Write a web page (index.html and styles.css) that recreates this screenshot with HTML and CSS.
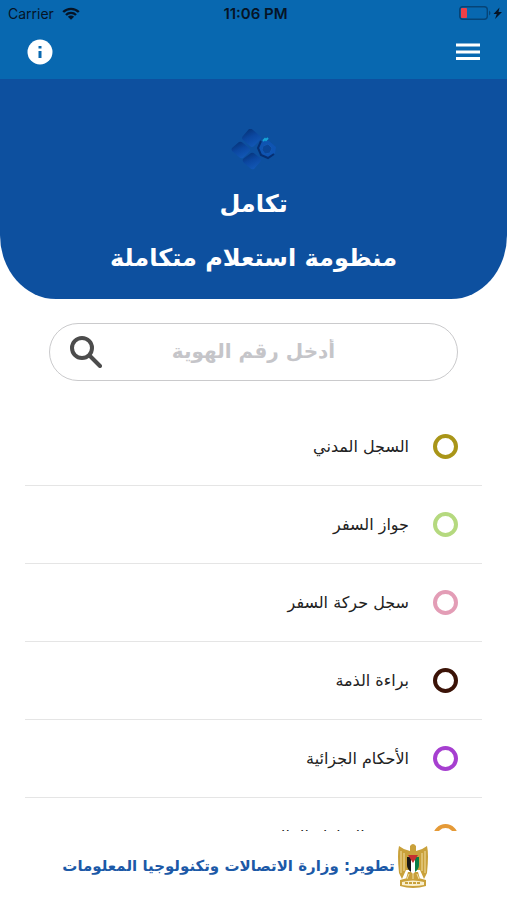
FILE: index.html
```html
<!DOCTYPE html>
<html lang="ar" dir="rtl">
<head>
<meta charset="utf-8">
<meta name="viewport" content="width=device-width, initial-scale=1">
<title>تكامل</title>
<link rel="stylesheet" href="styles.css">
</head>
<body>
<div class="app">
  <header class="topbar">
    <div class="status" dir="ltr">
      <span class="carrier">Carrier
        <svg class="wifi" viewBox="0 0 18 13" aria-hidden="true"><path d="M1.2 5a11.2 11.2 0 0 1 15.6 0M4 8a7 7 0 0 1 10 0" fill="none" stroke="#061426" stroke-width="2.4"/><path d="M5.9 9.7a4.4 4.4 0 0 1 6.2 0L9 12.8z" fill="#061426"/></svg>
      </span>
      <span class="time">11:06 PM</span>
      <span class="power">
        <svg class="battery" viewBox="0 0 44 14" aria-hidden="true"><rect x=".7" y=".7" width="27.6" height="12.6" rx="3" fill="none" stroke="#064477" stroke-width="1.4"/><path d="M30 4.5q3 2.500 0 5z" fill="#064477"/><rect x="2" y="2" width="6" height="10" rx="1" fill="#ef4048"/><path d="M40.500 1.500l-6 6.500h3.300L36 13l7-7h-3.500z" fill="#061426"/></svg>
      </span>
    </div>
    <nav class="toolbar">
      <button class="icon-button" aria-label="القائمة"><svg class="menu" viewBox="0 0 24 18" aria-hidden="true"><path d="M0 2h24M0 9h24M0 15.500h24" stroke="#fff" stroke-width="2.800"/></svg></button>
      <button class="icon-button" aria-label="معلومات"><svg class="info" viewBox="0 0 26 26" aria-hidden="true"><circle cx="13" cy="13" r="12.500" fill="#fff"/><path d="M11.500 7h3v2.600h-3zM11.500 12h3v7h-3z" fill="#0868b0"/></svg></button>
    </nav>
  </header>
  <section class="hero">
    <svg class="logo" viewBox="0 0 46 42" aria-hidden="true">
      <defs><linearGradient id="tile" x1=".1" y1="0" x2=".6" y2="1"><stop offset="0" stop-color="#052f70"/><stop offset=".5" stop-color="#0b47a0"/><stop offset="1" stop-color="#1258b6"/></linearGradient></defs>
      <g fill="url(#tile)"><path d="M18 0q2-1 4 1l7 6q2 2 0 4l-6 6q-2 2-4 0l-7-6q-2-2 0-4z"/><path d="M8 13q2-1 4 1l6 5q2 2 0 4l-6 6q-2 1-4-1l-7-6q-1-2 0-3z"/><path d="M20 24q2-1 4 1l5 4q2 2 0 4l-6 7q-2 1-4-1l-6-5q-2-2-1-4z"/></g>
      <path d="M30 12h8l7 6-1 6-6 5-7-2-3-8z" fill="#0f54b2"/>
      <path d="M30 12l-3 7 3 7 7 3 6-4" fill="none" stroke="#062f72" stroke-width="2"/>
      <path d="M32 17l5-2 4 4-2 5-5 1-3-4z" fill="#0b4698" stroke="#1258b4"/>
      <path d="M32 12l2-2 1 1 2-2" fill="none" stroke="#16a4d7" stroke-width="2"/>
    </svg>
    <h1 class="title">تكامل</h1>
    <p class="subtitle">منظومة استعلام متكاملة</p>
  </section>
  <main class="content">
    <form class="search">
      <input class="search-input" type="text" aria-label="رقم الهوية" placeholder="أدخل رقم الهوية">
      <button class="search-button" type="button" aria-label="بحث"><svg class="lens" viewBox="0 0 32 32" aria-hidden="true"><circle cx="12" cy="12" r="10" fill="none" stroke="#4c4c4c" stroke-width="4"/><path d="M20 20l10 10" stroke="#4c4c4c" stroke-width="4" stroke-linecap="round"/></svg></button>
    </form>
    <ul class="services">
      <li class="service"><span class="ring olive"></span><a class="service-link" href="#">السجل المدني</a></li>
      <li class="service"><span class="ring green"></span><a class="service-link" href="#">جواز السفر</a></li>
      <li class="service"><span class="ring pink"></span><a class="service-link" href="#">سجل حركة السفر</a></li>
      <li class="service"><span class="ring brown"></span><a class="service-link" href="#">براءة الذمة</a></li>
      <li class="service"><span class="ring purple"></span><a class="service-link" href="#">الأحكام الجزائية</a></li>
      <li class="service"><span class="ring orange"></span><a class="service-link" href="#">رسوم السلطة المالية</a></li>
    </ul>
  </main>
  <footer class="footer">
    <svg class="eagle" viewBox="0 0 32 46" aria-hidden="true">
      <g fill="#c9a13b"><path d="M13 3q3-4 6 0v5q6-1 11-5 2 8 0 27l-3 6-4-9H9l-4 9-3-6Q0 11 2 3q5 4 11 5z"/><path d="M11 29h10l2 7H9z"/><path d="M3 37q13-5 26 0v6q-13 4-26 0z"/></g>
      <path d="M4 8v22M7 10v18M25 10v18M28 8v22M12 31l-2 5M16 31v5M20 31l2 5" stroke="#f2dfa5" stroke-width="1"/>
      <path d="M5 39q11-3 22 0v3q-11 2-22 0z" fill="#f8efcf"/><path d="M8 40h16" stroke="#c9a13b" stroke-width="2" stroke-dasharray="3 1"/>
      <path d="M10 14h4v15q-4-3-4-7z" fill="#171717"/><path d="M14 14h4v15l-2 2-2-2z" fill="#fff"/><path d="M18 14h4v8q0 4-4 7z" fill="#087d46"/><path d="M11 12h10l-5 8z" fill="#c52f32"/>
    </svg>
    <span class="credit">تطوير: وزارة الاتصالات وتكنولوجيا المعلومات</span>
  </footer>
</div>
</body>
</html>
```
FILE: styles.css
```css
* { box-sizing: border-box; }
body { margin: 0; background: #fff; color: #222; font-family: "DejaVu Sans", sans-serif; }
button { padding: 0; border: 0; background: none; }
svg { display: block; }
.app { display: flex; flex-direction: column; height: 100vh; overflow: hidden; }
.topbar { flex: none; padding-bottom: 13px; background: #0868b0; }
.status { display: grid; grid-template-columns: 1fr auto 1fr; align-items: center; height: 26px; padding: 0 4px 0 8px; color: #061426; font-family: Inter, sans-serif; font-size: 14px; }
.carrier { display: flex; align-items: center; gap: 8px; }
.wifi { width: 18px; height: 13px; }
.time { font-size: 15px; font-weight: 600; }
.power { justify-self: end; }
.battery { width: 44px; height: 14px; }
.toolbar { display: flex; justify-content: space-between; align-items: center; height: 40px; padding: 12px 27px 0; }
.menu { width: 24px; height: 18px; }
.info { width: 26px; height: 26px; }
.hero { flex: none; display: flex; flex-direction: column; align-items: center; padding: 50px 16px 14px; border-radius: 0 0 56px 56px / 0 0 64px 64px; background: #0d509f; color: #fff; }
.logo { width: 46px; height: 42px; margin-bottom: 6px; }
.title, .subtitle { margin: 0; font-size: 24px; font-weight: 700; line-height: 54px; }
.content { flex: 1; min-height: 0; overflow: hidden; padding: 24px 25px 0; }
.search { display: flex; align-items: center; height: 58px; margin: 0 24px; padding: 0 20px; border: 1px solid #cacacc; border-radius: 30px; }
.search-input { flex: 1; min-width: 0; padding: 0 32px 2px 0; border: 0; outline: 0; background: none; font: 700 20px "DejaVu Sans", sans-serif; text-align: center; }
.search-input::placeholder { color: #c5c5c9; opacity: 1; }
.lens { width: 32px; height: 32px; }
.services { margin: 27px 0 0; padding: 0; list-style: none; }
.service { display: flex; align-items: center; gap: 24px; height: 78px; padding: 0 24px; border-bottom: 1px solid #e5e5e5; }
.service-link { color: #222; font-size: 16px; text-decoration: none; }
.ring { width: 25px; height: 25px; border: 4px solid; border-radius: 50%; }
.olive { border-color: #a99518; }
.green { border-color: #b5d97f; }
.pink { border-color: #e39db6; }
.brown { border-color: #3b1307; }
.purple { border-color: #a63fd0; }
.orange { border-color: #e59a37; }
.footer { flex: none; display: flex; justify-content: center; align-items: center; height: 69px; gap: 2px; padding: 0 28px 0 12px; }
.eagle { width: 32px; height: 46px; }
.credit { color: #1c59a7; font-size: 15px; font-weight: 700; }
```
